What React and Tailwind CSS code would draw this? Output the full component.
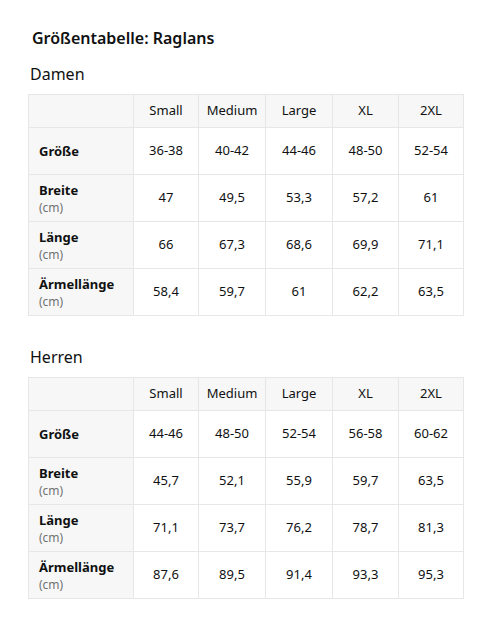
import React from "react";

const sizes = ["Small", "Medium", "Large", "XL", "2XL"];
const colW = ["w-[105px]", "w-[65px]", "w-[67px]", "w-[67px]", "w-[66px]", "w-[65px]"];

const damen = [
  { label: "Größe", unit: false, vals: ["36-38", "40-42", "44-46", "48-50", "52-54"] },
  { label: "Breite", unit: true, vals: ["47", "49,5", "53,3", "57,2", "61"] },
  { label: "Länge", unit: true, vals: ["66", "67,3", "68,6", "69,9", "71,1"] },
  { label: "Ärmellänge", unit: true, vals: ["58,4", "59,7", "61", "62,2", "63,5"] },
];
const herren = [
  { label: "Größe", unit: false, vals: ["44-46", "48-50", "52-54", "56-58", "60-62"] },
  { label: "Breite", unit: true, vals: ["45,7", "52,1", "55,9", "59,7", "63,5"] },
  { label: "Länge", unit: true, vals: ["71,1", "73,7", "76,2", "78,7", "81,3"] },
  { label: "Ärmellänge", unit: true, vals: ["87,6", "89,5", "91,4", "93,3", "95,3"] },
];

function SizeTable({ rows }) {
  return (
    <table className="border-collapse table-fixed w-[436px] border border-[#e7e7e7] text-[13px] text-[#0f1111]">
      <colgroup>
        {colW.map((w, i) => (
          <col key={i} className={w} />
        ))}
      </colgroup>
      <thead>
        <tr className="h-[33px] bg-[#f7f7f7]">
          <th className="border-b border-[#e7e7e7]"></th>
          {sizes.map((s) => (
            <th key={s} className="font-normal text-center border border-[#e7e7e7]">
              {s}
            </th>
          ))}
        </tr>
      </thead>
      <tbody>
        {rows.map((r) => (
          <tr key={r.label} className="h-[47px]">
            <td className="bg-[#f7f7f7] pl-[10px] text-left align-middle border-b border-[#e7e7e7]">
              <div className="font-bold leading-[18px]">{r.label}</div>
              {r.unit && <div className="text-[12px] text-[#6f7373] leading-[17px]">(cm)</div>}
            </td>
            {r.vals.map((v, i) => (
              <td key={i} className="text-center align-middle border border-[#e7e7e7]">
                {v}
              </td>
            ))}
          </tr>
        ))}
      </tbody>
    </table>
  );
}

export default function App() {
  return (
    <div className="w-[500px] h-[630px] bg-white pl-[28px] pt-[27px]" style={{ fontFamily: '"Noto Sans", Arial, sans-serif' }}>
      <h1 className="text-[16px] font-semibold text-[#0f1111] pl-[4px] leading-[22px]">Größentabelle: Raglans</h1>
      <h2 className="text-[16px] font-normal text-[#0f1111] pl-[2px] mt-[14px] leading-[22px]">Damen</h2>
      <div className="mt-[9px]">
        <SizeTable rows={damen} />
      </div>
      <h2 className="text-[16px] font-normal text-[#0f1111] pl-[2px] mt-[30px] leading-[22px]">Herren</h2>
      <div className="mt-[9px]">
        <SizeTable rows={herren} />
      </div>
    </div>
  );
}
